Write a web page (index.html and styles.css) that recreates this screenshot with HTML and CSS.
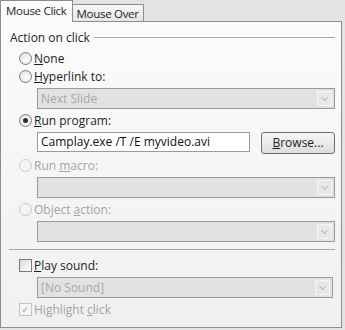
FILE: index.html
```html
<!DOCTYPE html>
<html lang="en">
<head>
    <meta charset="UTF-8">
    <title>Action Settings</title>
    <link rel="stylesheet" href="styles.css">
</head>
<body>
    <div class="tabs">
        <div class="tab active">Mouse Click</div>
        <div class="tab">Mouse Over</div>
    </div>
    <div class="panel">
        <div class="group-title"><span>Action on click</span><div class="rule"></div></div>

        <div class="option first"><span class="radio"></span><span><u>N</u>one</span></div>

        <div class="option"><span class="radio"></span><span><u>H</u>yperlink to:</span></div>
        <div class="select disabled"><span>Next Slide</span><span class="arrow"></span></div>

        <div class="option"><span class="radio checked"></span><span><u>R</u>un program:</span></div>
        <div class="program-row">
            <div class="textbox">Camplay.exe /T /E myvideo.avi</div>
            <div class="button"><u>B</u>rowse...</div>
        </div>

        <div class="option off"><span class="radio"></span><span>Run <u>m</u>acro:</span></div>
        <div class="select disabled"><span></span><span class="arrow"></span></div>

        <div class="option off"><span class="radio"></span><span>Object <u>a</u>ction:</span></div>
        <div class="select disabled"><span></span><span class="arrow"></span></div>

        <div class="separator"></div>

        <div class="option sound-option"><span class="check"></span><span><u>P</u>lay sound:</span></div>
        <div class="select disabled sound"><span>[No Sound]</span><span class="arrow"></span></div>

        <div class="option off"><span class="check ticked">&#10003;</span><span>Highlight <u>c</u>lick</span></div>
    </div>
</body>
</html>
```

FILE: styles.css
```css
body {
    margin: 0;
    width: 345px;
    height: 330px;
    background-color: #e3e3e3;
    font-family: "Open Sans", sans-serif;
    font-size: 12px;
    color: #1e1e1e;
    overflow: hidden;
}
u {
    text-decoration: underline;
    text-underline-offset: 1px;
}

/* tab strip */
.tabs {
    display: flex;
    align-items: flex-end;
    height: 21px;
    padding-left: 1px;
}
.tab {
    height: 16px;
    padding: 0 4px;
    line-height: 17px;
    font-size: 11.5px;
    letter-spacing: -0.3px;
    border: 1px solid #8d8d8d;
    border-bottom: none;
    background: linear-gradient(#f7f7f7, #e6e6e6);
    margin-left: -1px;
}
.tab.active {
    height: 21px;
    line-height: 19px;
    padding: 0 5px;
    background: #fbfbfb;
    margin-bottom: -1px;
    position: relative;
    z-index: 1;
}

.panel {
    width: 340px;
    height: 305px;
    border: 1px solid #8d8d8d;
    background: linear-gradient(#fbfbfb, #f0f0f0);
    display: flex;
    flex-direction: column;
}

.group-title {
    display: flex;
    align-items: center;
    margin: 8px 6px 0 9px;
    height: 14px;
}
.group-title .rule {
    flex: 1;
    height: 1px;
    background: #a6a6a6;
    margin-left: 4px;
}

.option {
    display: flex;
    align-items: center;
    height: 14px;
    margin: 4px 0 0 18px;
}
.option.first {
    margin-top: 7px;
}
.option.sound-option {
    margin-top: 8px;
}
.option.off {
    color: #a3a3a3;
}
.radio {
    width: 11px;
    height: 11px;
    border: 1px solid #7a7a7a;
    border-radius: 50%;
    background: radial-gradient(circle at 60% 60%, #ffffff, #dcdcdc);
    margin-right: 2px;
    position: relative;
    flex-shrink: 0;
}
.radio.checked::after {
    content: "";
    position: absolute;
    left: 3px;
    top: 3px;
    width: 5px;
    height: 5px;
    border-radius: 50%;
    background: #2b2b2b;
}
.option.off .radio {
    border-color: #c9c9c9;
    background: #f4f4f4;
}

.check {
    width: 11px;
    height: 11px;
    border: 1px solid #7a7a7a;
    background: linear-gradient(135deg, #dadada, #ffffff);
    margin-right: 2px;
    flex-shrink: 0;
    font-family: "DejaVu Sans", sans-serif;
    font-size: 10px;
    line-height: 11px;
    text-align: center;
}
.check.ticked {
    border-color: #c3c3c3;
    background: #f5f5f5;
    color: #a8a8a8;
}

.select {
    display: flex;
    align-items: center;
    justify-content: space-between;
    height: 19px;
    margin: 5px 6px 0 36px;
    border: 1px solid #9a9a9a;
    background: #e2e2e2;
    color: #a8a8a8;
    padding-left: 3px;
}
.select.sound {
    margin-right: 8px;
}
.arrow {
    width: 15px;
    height: 15px;
    margin-right: 2px;
    border: 1px solid #f6f6f6;
    box-sizing: border-box;
    background: #e8e8e8;
    position: relative;
}
.arrow::after {
    content: "";
    position: absolute;
    left: 4px;
    top: 3px;
    width: 4px;
    height: 4px;
    border-right: 1px solid #b8b8b8;
    border-bottom: 1px solid #b8b8b8;
    transform: rotate(45deg);
}

.program-row {
    display: flex;
    margin: 5px 6px 0 36px;
}
.textbox {
    width: 208px;
    height: 18px;
    line-height: 18px;
    border: 1px solid #9a9a9a;
    background: #ffffff;
    padding-left: 3px;
    color: #111;
}
.button {
    margin-left: 11px;
    width: 72px;
    height: 20px;
    line-height: 20px;
    text-align: center;
    border: 1px solid #6e6e6e;
    border-radius: 3px;
    background: linear-gradient(#f6f6f6, #dddddd);
}

.separator {
    height: 1px;
    background: #a6a6a6;
    margin: 7px 6px 0 8px;
}
```
